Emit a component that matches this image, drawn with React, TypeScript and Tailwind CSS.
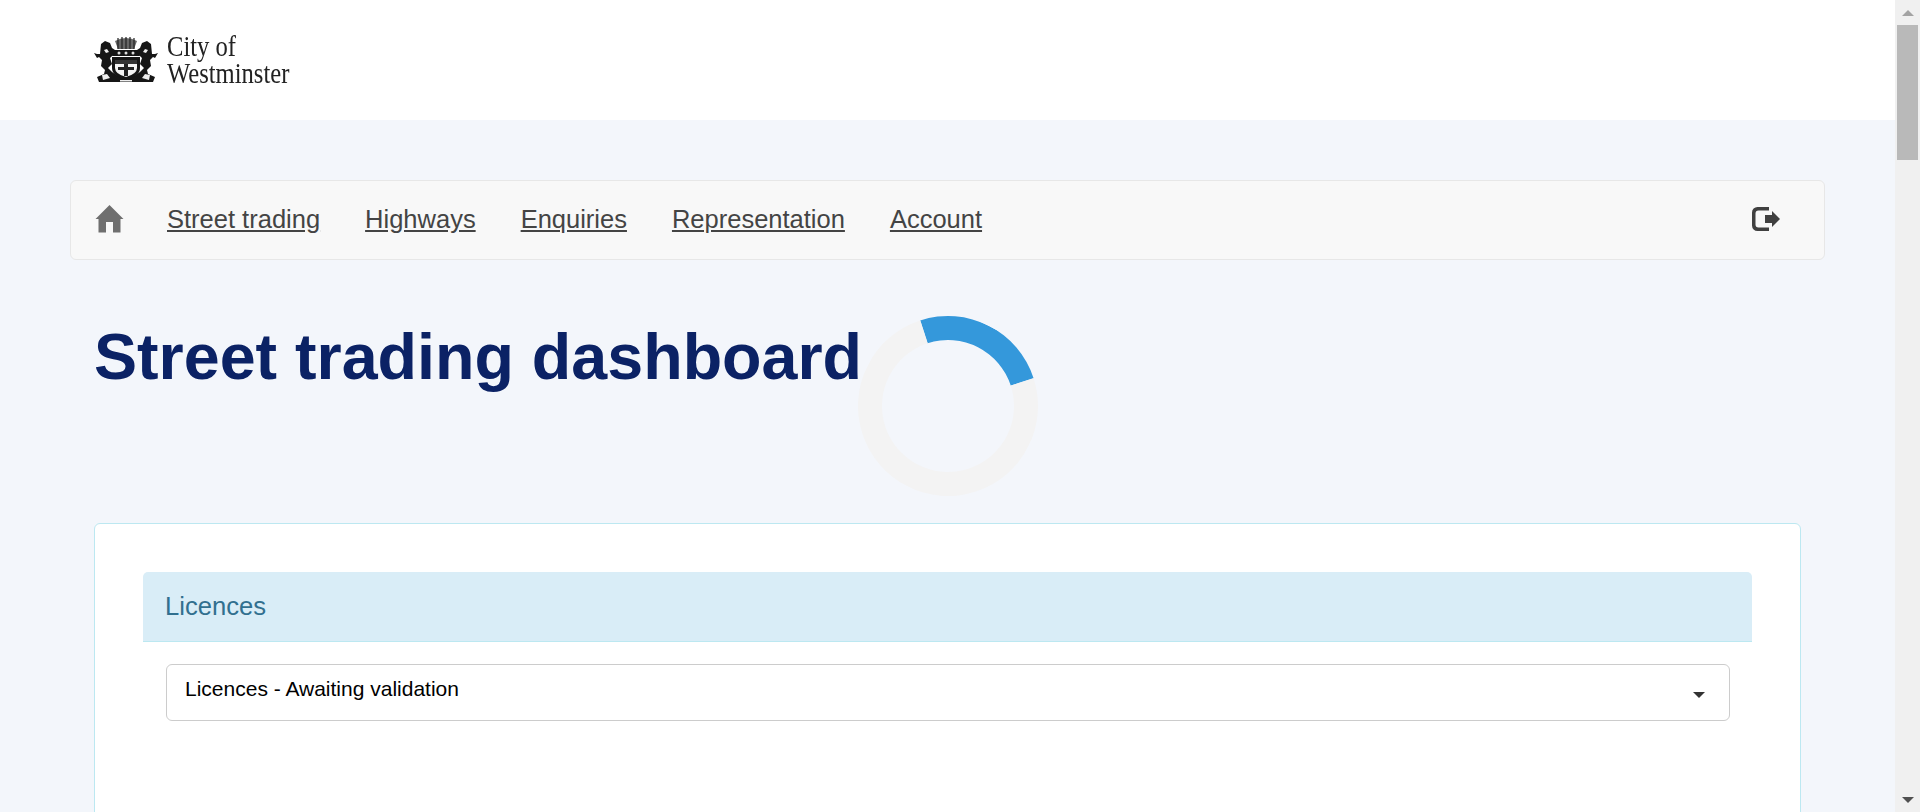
function Crest() {
  const lion =
    "M7 8 L11 5 L16 7 L18 12 L21 14 L19 19 L16 22 L18 28 L14 32 L18 36 L24 40 L32 42 V46 H5 L3 41 L10 38 L11 34 L7 30 L8 24 L5 21 L3 22 L0 17 L3 18 L6 18 Z";
  return (
    <svg viewBox="0 0 64 47" className="w-16 h-[47px] shrink-0 blur-[0.4px]" fill="#161616">
      {/* helm and portcullis */}
      <path d="M21 5 Q32 -1 43 5 L40 13 L24 13 Z" fill="#666" />
      <path d="M24 2v11M28 1v12M32 1v12M36 1v12M40 2v11" stroke="#222" strokeWidth="1.2" fill="none" />
      <path d="M20 14h24l2 6H18z" />
      <circle cx="25" cy="17" r="1.5" fill="#ddd" />
      <circle cx="32" cy="17" r="1.5" fill="#ddd" />
      <circle cx="39" cy="17" r="1.5" fill="#ddd" />
      {/* lions either side */}
      <path d={lion} />
      <g transform="translate(64,0) scale(-1,1)">
        <path d={lion} />
      </g>
      <path d="M8 39l5-1 3 4-7 2zM56 39l-5-1-3 4 7 2z" fill="#eee" />
      <path d="M10 14l3-1 2 3-3 1zM54 14l-3-1-2 3 3 1z" fill="#eee" />
      {/* shield */}
      <path d="M18 21h28v11q0 8-14 12q-14-4-14-12z" />
      <path d="M21 24h22v8q0 6-11 9q-11-3-11-9z" fill="#f4f4f4" />
      <path d="M21 24h22v4H21z" fill="#333" />
      <path d="M30 28h4v12h-4zM24 31h16v3H24z" fill="#222" />
      <path d="M26 44h12v1.5H26z" fill="#eee" />
    </svg>
  );
}

function HomeIcon() {
  return (
    <svg viewBox="0 0 28 28" className="w-[29px] h-7 shrink-0 -mt-[3px]" fill="#6f6f6f">
      <path d="M14 0 L28 14 L25 14 L25 27.5 L17.5 27.5 L17.5 17 L10.5 17 L10.5 27.5 L3 27.5 L3 14 L0 14 Z" />
    </svg>
  );
}

function LogoutIcon() {
  return (
    <svg viewBox="0 0 28 24" className="w-7 h-6 shrink-0 -mt-[2px]" fill="#404040">
      <path d="M17 0v3.5H6.5a3 3 0 0 0-3 3v11a3 3 0 0 0 3 3H17V24H5.5A5.5 5.5 0 0 1 0 18.5v-13A5.5 5.5 0 0 1 5.5 0z" />
      <path d="M13 8h7V4l8 8-8 8v-4h-7z" />
    </svg>
  );
}

const navLinks = ["Street trading", "Highways", "Enquiries", "Representation", "Account"];

export default function App() {
  return (
    <div className="flex h-[812px] overflow-hidden bg-[#f3f6fb] font-['Liberation_Sans',Arial,sans-serif]">
      <div className="relative flex-1 min-w-0">
        <header className="h-[120px] bg-white pl-[94px] pt-[36px] flex items-start gap-[9px]">
          <Crest />
          <div className="-mt-[4px] origin-left scale-x-[0.82] font-['Liberation_Serif',serif] text-[#222] text-[30px] leading-[27px] blur-[0.3px]">
            <div>City of</div>
            <div>Westminster</div>
          </div>
        </header>

        <nav className="mt-[60px] mx-[70px] h-[80px] flex items-center bg-[#f8f8f8] border border-[#e7e7e7] rounded-[6px] pl-[24px] pr-[44px]">
          <HomeIcon />
          <div className="flex items-center gap-[45px] ml-[43px] -mt-[2px]">
            {navLinks.map((l) => (
              <a key={l} href="#" className="text-[25.5px] text-[#444] underline">
                {l}
              </a>
            ))}
          </div>
          <div className="ml-auto">
            <LogoutIcon />
          </div>
        </nav>

        <h1 className="mt-[62px] ml-[94px] text-[64.6px] leading-[70px] font-bold text-[#0b2265]">
          Street trading dashboard
        </h1>

        {/* loading spinner sits over the page */}
        <div className="absolute left-[858px] top-[316px] w-[180px] h-[180px] rounded-full border-[24px] border-[#f3f3f3] border-t-[#3498db] rotate-[27deg]"></div>

        <section className="mt-[131px] ml-[94px] w-[1707px] h-[400px] bg-white border border-[#bce8f1] rounded-[6px] px-[48px] pt-[48px]">
          <div className="h-[70px] flex items-center px-[22px] bg-[#d9edf7] border-b border-[#bce8f1] rounded-t-[5px] text-[#31708f] text-[25.6px]">
            Licences
          </div>
          <div className="mt-[22px] ml-[23px] mr-[22px] h-[57px] flex items-start justify-between pl-[18px] pr-[24px] pt-[11px] bg-white border border-[#ccc] rounded-[6px] text-black text-[21px] leading-[25px]">
            <span>Licences - Awaiting validation</span>
            <span className="mt-[16px] w-0 h-0 border-x-[6px] border-x-transparent border-t-[6px] border-t-[#333]"></span>
          </div>
        </section>
      </div>

      {/* browser scrollbar */}
      <aside className="w-[25px] shrink-0 bg-[#f0f0f0] flex flex-col items-center">
        <div className="h-[25px] flex items-center justify-center">
          <span className="w-0 h-0 border-x-[6px] border-x-transparent border-b-[6px] border-b-[#a3a3a3]"></span>
        </div>
        <div className="w-[21px] h-[135px] bg-[#b9b9b9]"></div>
        <div className="mt-auto h-[25px] flex items-center justify-center">
          <span className="w-0 h-0 border-x-[6px] border-x-transparent border-t-[6px] border-t-[#505050]"></span>
        </div>
      </aside>
    </div>
  );
}
